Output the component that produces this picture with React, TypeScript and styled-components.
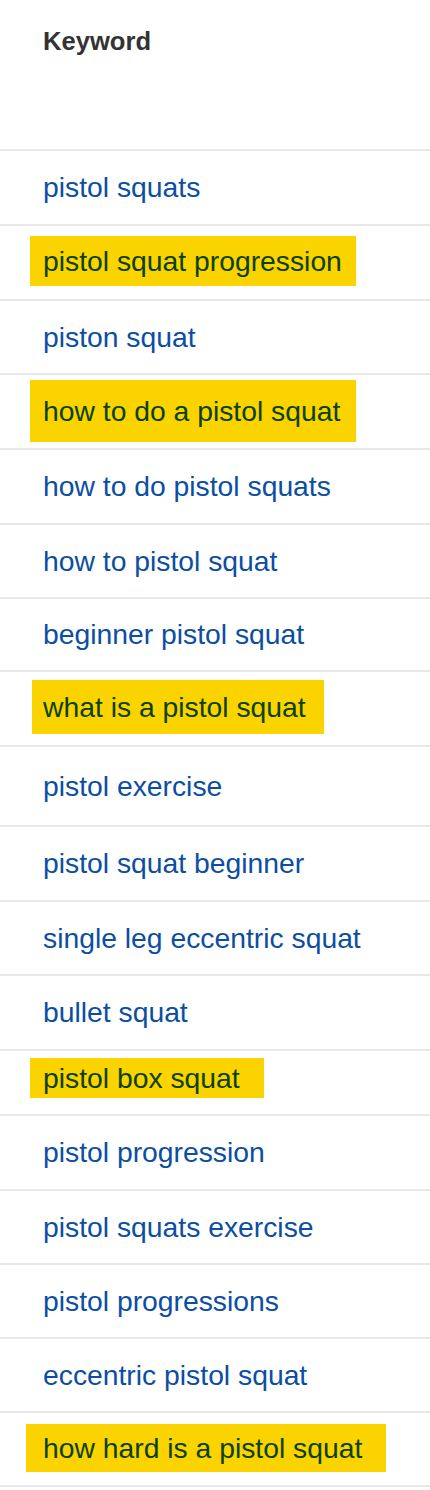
import styled, { createGlobalStyle } from 'styled-components';

const GlobalStyle = createGlobalStyle`
  body {
    margin: 0;
    background: #fff;
    font-family: "Liberation Sans", Arial, Helvetica, sans-serif;
  }
`;

type Mark = { x: number; w: number; h: number; dy?: number };
type Keyword = { text: string; height: number; mark?: Mark };

const keywords: Keyword[] = [
  { text: 'pistol squats', height: 73 },
  { text: 'pistol squat progression', height: 73, mark: { x: 30, w: 326, h: 50, dy: -1.5 } },
  { text: 'piston squat', height: 72 },
  { text: 'how to do a pistol squat', height: 73, mark: { x: 30, w: 326, h: 62, dy: -0.5 } },
  { text: 'how to do pistol squats', height: 73 },
  { text: 'how to pistol squat', height: 72 },
  { text: 'beginner pistol squat', height: 71 },
  { text: 'what is a pistol squat', height: 73, mark: { x: 32, w: 292, h: 54, dy: -1.5 } },
  { text: 'pistol exercise', height: 78 },
  { text: 'pistol squat beginner', height: 73 },
  { text: 'single leg eccentric squat', height: 72 },
  { text: 'bullet squat', height: 73 },
  { text: 'pistol box squat', height: 63, mark: { x: 30, w: 234, h: 40, dy: -4.5 } },
  { text: 'pistol progression', height: 73 },
  { text: 'pistol squats exercise', height: 72 },
  { text: 'pistol progressions', height: 72 },
  { text: 'eccentric pistol squat', height: 72 },
  { text: 'how hard is a pistol squat', height: 72, mark: { x: 26, w: 360, h: 48, dy: -1 } },
];

export default function App() {
  return (
    <>
      <GlobalStyle />
      <Table>
        <HeaderCell>Keyword</HeaderCell>
        {keywords.map((k) => (
          <Row key={k.text} $height={k.height}>
            {k.mark ? (
              <Highlight $x={k.mark.x} $w={k.mark.w} $h={k.mark.h} $dy={k.mark.dy ?? 0}>
                {k.text}
              </Highlight>
            ) : (
              <Link>{k.text}</Link>
            )}
          </Row>
        ))}
      </Table>
    </>
  );
}

const Table = styled.div`
  width: 430px;
  display: flex;
  flex-direction: column;
`;

const HeaderCell = styled.div`
  height: 151px;
  box-sizing: border-box;
  padding: 27px 0 0 43px;
  border-bottom: 2px solid #e8e8e8;
  font-size: 25.6px;
  font-weight: 700;
  color: #333;
`;

const Row = styled.div<{ $height: number }>`
  height: ${(p) => p.$height}px;
  border-bottom: 2px solid #e8e8e8;
  display: flex;
  align-items: center;
  padding-left: 43px;
  font-size: 28.3px;
`;

const Link = styled.span`
  color: #0b4ea2;
  white-space: nowrap;
`;

const Highlight = styled.span<{ $x: number; $w: number; $h: number; $dy: number }>`
  display: flex;
  align-items: center;
  box-sizing: border-box;
  margin-left: ${(p) => p.$x - 43}px;
  padding-left: ${(p) => 43 - p.$x}px;
  width: ${(p) => p.$w}px;
  height: ${(p) => p.$h}px;
  margin-bottom: ${(p) => -p.$dy * 2}px;
  background: #fbd400;
  color: #0b4100;
  white-space: nowrap;
`;
